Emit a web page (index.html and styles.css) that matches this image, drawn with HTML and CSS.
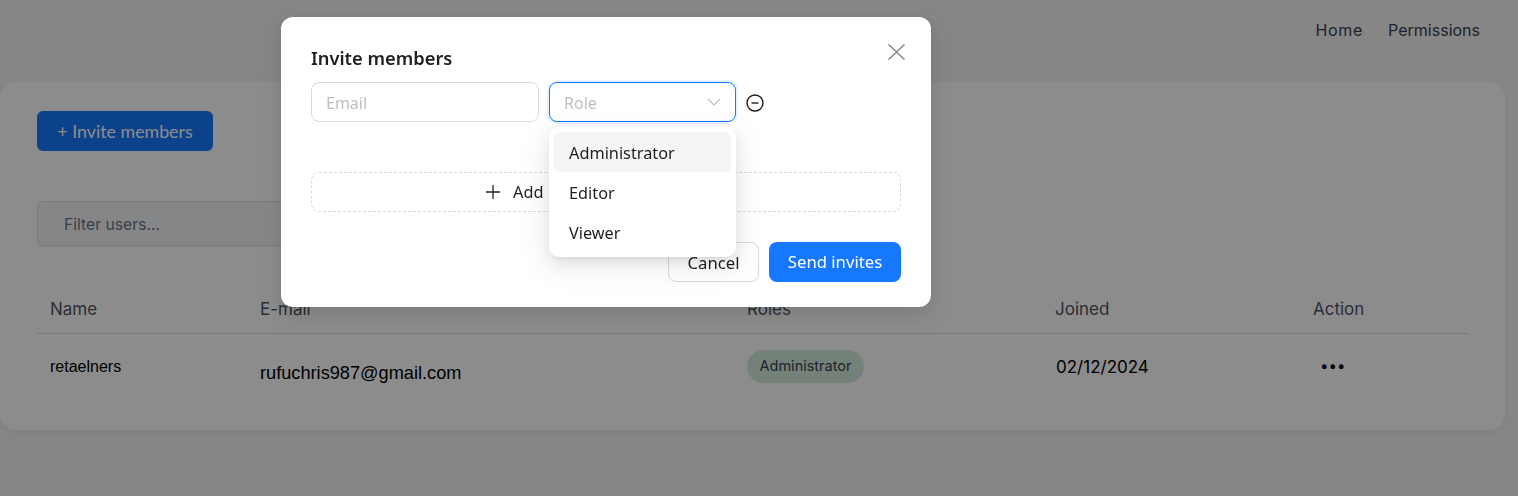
FILE: index.html
```html
<!DOCTYPE html>
<html lang="en">
<head>
<meta charset="utf-8">
<title>Invite members</title>
<link rel="stylesheet" href="styles.css">
</head>
<body>
<header class="nav">
  <a class="nav-link">Home</a>
  <a class="nav-link">Permissions</a>
</header>
<main class="card">
  <button class="invite-btn">+ Invite members</button>
  <div class="filter">Filter users...</div>
  <div class="row head">
    <div class="c-name">Name</div>
    <div class="c-mail">E-mail</div>
    <div class="c-role">Roles</div>
    <div class="c-join">Joined</div>
    <div class="c-act">Action</div>
  </div>
  <div class="row body-row">
    <div class="c-name user">retaelners</div>
    <div class="c-mail mail">rufuchris987@gmail.com</div>
    <div class="c-role"><span class="badge">Administrator</span></div>
    <div class="c-join date">02/12/2024</div>
    <div class="c-act dots">•••</div>
  </div>
</main>
<div class="overlay">
  <section class="modal">
    <svg class="close" viewBox="0 0 17 16" width="17" height="16"><path d="M.5.5 16.5 15.5M16.5.5 .5 15.5" fill="none" stroke="#808080" stroke-width="1.3"/></svg>
    <h2 class="title">Invite members</h2>
    <div class="fields">
      <div class="input placeholder">Email</div>
      <div class="select-wrap">
        <div class="input select placeholder">Role
          <svg class="chev" viewBox="0 0 14 8" width="14" height="8"><path d="M1 1 7 7 13 1" fill="none" stroke="#bdbdbd" stroke-width="1.2"/></svg>
        </div>
        <ul class="menu">
          <li class="opt active">Administrator</li>
          <li class="opt">Editor</li>
          <li class="opt">Viewer</li>
        </ul>
      </div>
      <svg class="minus" viewBox="0 0 18 18" width="18" height="18"><circle cx="9" cy="9" r="8" fill="none" stroke="#1f1f1f" stroke-width="1.4"/><path d="M5.5 9h7" stroke="#1f1f1f" stroke-width="1.4"/></svg>
    </div>
    <div class="add"><svg viewBox="0 0 14 14" width="14" height="14"><path d="M7 0v14M0 7h14" stroke="#222" stroke-width="1.3"/></svg><span>Add</span></div>
    <div class="actions">
      <button class="btn">Cancel</button>
      <button class="btn primary">Send invites</button>
    </div>
  </section>
</div>
</body>
</html>
```
FILE: styles.css
```css
* { box-sizing: border-box; }
html, body { height: 100%; }
body {
  margin: 0;
  overflow: hidden;
  background: #f4f4f4;
  font-family: Inter, "Liberation Sans", sans-serif;
  color: #111;
}
.nav {
  height: 82px;
  display: flex;
  justify-content: flex-end;
  gap: 25px;
  padding: 20px 38px 0 0;
  font-size: 16px;
  line-height: 20px;
  color: #374151;
}
.nav-link:first-child { letter-spacing: .7px; }
.card {
  width: 1505px;
  height: 348px;
  background: #fff;
  border-radius: 16px;
  padding: 29px 37px 0;
  box-shadow: 0 2px 6px rgba(0,0,0,.05);
}
.invite-btn {
  display: block;
  width: 176px;
  height: 40px;
  border: 0;
  border-radius: 6px;
  background: #1677ff;
  color: #fff;
  font: 17.8px/40px Lato, sans-serif;
  padding: 0;
}
.filter {
  margin-top: 50px;
  width: 400px;
  height: 45px;
  border: 1px solid #dde1e6;
  border-radius: 6px;
  background: #f3f5f8;
  color: #6b7280;
  font-size: 15.7px;
  line-height: 45px;
  padding-left: 26px;
  box-shadow: 0 1px 3px rgba(0,0,0,.06);
}
.row {
  display: grid;
  grid-template-columns: 210px 487px 308px 258px 1fr;
  padding-left: 13px;
  width: 1432px;
}
.head {
  margin-top: 43px;
  height: 45px;
  line-height: 40px;
  border-bottom: 1px solid #d9dce1;
  color: #4b5563;
  font-size: 17px;
}
.body-row { height: 66px; align-items: center; }
.user { font: 16px/1 "Liberation Sans", sans-serif; color: #000; margin-top: -1px; }
.mail { font: 18.2px/1 "Liberation Sans", sans-serif; color: #000; margin-top: 12px; }
.badge {
  display: block;
  height: 33px;
  width: 117px;
  line-height: 32px;
  text-align: center;
  border-radius: 17px;
  background: #d3ecdb;
  font-size: 14.5px;
  color: #374151;
  margin-top: -1px;
}
.date { font-size: 17px; color: #000; margin-left: 1px; }
.dots { font-size: 15px; color: #0b0b2a; padding-left: 7px; margin-top: -3px; }
.overlay {
  position: fixed;
  inset: 0;
  background: rgba(0,0,0,.45);
  padding: 17px 0 0 281px;
}
.modal {
  position: relative;
  width: 650px;
  height: 290px;
  background: #fff;
  border-radius: 12px;
  padding: 30px;
  font-family: "Noto Sans", sans-serif;
  box-shadow: 0 6px 16px rgba(0,0,0,.08), 0 9px 28px 8px rgba(0,0,0,.05);
}
.close { position: absolute; top: 27px; right: 26px; }
.title {
  margin: 0 0 13px;
  height: 22px;
  font-size: 18.3px;
  line-height: 22px;
  font-weight: 600;
  color: #1f1f1f;
}
.fields { display: flex; align-items: center; gap: 10px; }
.minus { position: relative; top: 1px; }
.input {
  width: 228px;
  height: 40px;
  border: 1px solid #d9d9d9;
  border-radius: 8px;
  font-size: 16px;
  line-height: 40px;
  padding-left: 14px;
  background: #fff;
}
.placeholder { color: #bfbfbf; }
.select-wrap { position: relative; width: 187px; }
.select {
  width: 187px;
  border-color: #1677ff;
  box-shadow: 0 0 0 2px rgba(5,145,255,.1);
  position: relative;
}
.chev { position: absolute; right: 14px; top: 15px; }
.menu {
  position: absolute;
  z-index: 2;
  top: 45px;
  left: 0;
  width: 187px;
  margin: 0;
  padding: 5px;
  list-style: none;
  background: #fff;
  border-radius: 10px;
  box-shadow: 0 6px 16px rgba(0,0,0,.08), 0 3px 6px -4px rgba(0,0,0,.12), 0 9px 28px 8px rgba(0,0,0,.05);
}
.opt {
  height: 40px;
  line-height: 42px;
  padding-left: 15px;
  font-size: 16.3px;
  color: #1f1f1f;
  border-radius: 6px;
}
.active { background: #f5f5f5; }
.add {
  margin-top: 50px;
  width: 590px;
  height: 40px;
  border: 1px dashed #d9d9d9;
  border-radius: 8px;
  display: flex;
  align-items: center;
  padding-left: 174px;
  gap: 13px;
  font-size: 16.3px;
  color: #1f1f1f;
}
.actions {
  margin-top: 30px;
  display: flex;
  justify-content: flex-end;
  gap: 10px;
}
.btn {
  height: 40px;
  width: 91px;
  border: 1px solid #d9d9d9;
  border-radius: 8px;
  background: #fff;
  color: #1f1f1f;
  font: 16.7px/40px "Noto Sans", sans-serif;
  padding: 0;
}
.primary {
  width: 132px;
  border: 0;
  background: #1677ff;
  color: #fff;
}
```
